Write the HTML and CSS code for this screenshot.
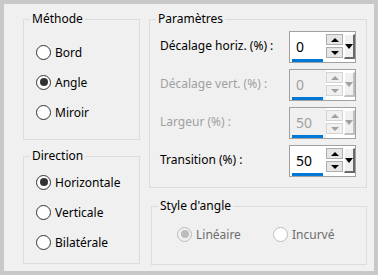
FILE: index.html
```html
<!DOCTYPE html>
<html lang="fr">
<head>
<meta charset="utf-8">
<link rel="stylesheet" href="styles.css">
</head>
<body>
<div class="dialog">
  <div class="col">
    <fieldset class="group methode">
      <legend>Méthode</legend>
      <div class="gbody">
        <label class="radio"><span class="circle"></span>Bord</label>
        <label class="radio"><span class="circle on"></span>Angle</label>
        <label class="radio"><span class="circle"></span>Miroir</label>
      </div>
    </fieldset>
    <fieldset class="group direction">
      <legend>Direction</legend>
      <div class="gbody">
        <label class="radio"><span class="circle on"></span>Horizontale</label>
        <label class="radio"><span class="circle"></span>Verticale</label>
        <label class="radio"><span class="circle"></span>Bilatérale</label>
      </div>
    </fieldset>
  </div>
  <div class="col">
    <fieldset class="group params">
      <legend>Paramètres</legend>
      <div class="gbody">
        <div class="row">
          <span class="lbl">Décalage horiz. (%) :</span>
          <div class="spin">
            <div class="field"><span class="val">0</span><span class="bar"></span></div>
            <div class="btns"><span class="sb up"></span><span class="sb down"></span></div>
            <span class="drop"></span>
          </div>
        </div>
        <div class="row disabled">
          <span class="lbl">Décalage vert. (%) :</span>
          <div class="spin">
            <div class="field"><span class="val">0</span><span class="bar"></span></div>
            <div class="btns"><span class="sb up"></span><span class="sb down"></span></div>
            <span class="drop"></span>
          </div>
        </div>
        <div class="row disabled">
          <span class="lbl">Largeur (%) :</span>
          <div class="spin">
            <div class="field"><span class="val">50</span><span class="bar"></span></div>
            <div class="btns"><span class="sb up"></span><span class="sb down"></span></div>
            <span class="drop"></span>
          </div>
        </div>
        <div class="row">
          <span class="lbl">Transition (%) :</span>
          <div class="spin">
            <div class="field"><span class="val">50</span><span class="bar"></span></div>
            <div class="btns"><span class="sb up"></span><span class="sb down"></span></div>
            <span class="drop"></span>
          </div>
        </div>
      </div>
    </fieldset>
    <fieldset class="group style">
      <legend>Style d'angle</legend>
      <div class="gbody hrow">
        <label class="radio off lin"><span class="circle on"></span>Linéaire</label>
        <label class="radio off"><span class="circle"></span>Incurvé</label>
      </div>
    </fieldset>
  </div>
</div>
</body>
</html>
```
FILE: styles.css
```css
* { box-sizing: border-box; }
html, body { margin: 0; padding: 0; }
body {
  width: 378px;
  height: 275px;
  font-family: "Noto Sans", "Open Sans", sans-serif;
  font-size: 12px;
  color: #000;
}
.dialog {
  width: 378px;
  height: 275px;
  border: 4px solid #c8c8c8;
  background: #f0f0f0;
  padding: 7px 7px 0 19px;
  display: grid;
  grid-template-columns: 117px 218px;
  column-gap: 9px;
  align-items: start;
}
.col { display: flex; flex-direction: column; }
.group {
  margin: 0;
  padding: 0;
  border: 1px solid #dcdcdc;
  min-width: 0;
}
.group legend {
  margin-left: 6px;
  padding: 0 2px;
  line-height: 16px;
}
.methode { height: 129px; }
.methode .gbody { padding: 10px 0 0 12px; }
.direction { margin-top: 8px; height: 116px; }
.direction .gbody { padding: 3px 0 0 12px; }
.radio {
  display: flex;
  align-items: center;
  height: 30px;
  gap: 4px;
}
.circle {
  width: 15px;
  height: 15px;
  border: 1px solid #333;
  border-radius: 50%;
  background: #fff;
  display: flex;
  align-items: center;
  justify-content: center;
  flex: none;
}
.circle.on::after {
  content: "";
  width: 8px;
  height: 8px;
  border-radius: 50%;
  background: #333;
}
.params { height: 177px; }
.params .gbody {
  padding: 4px 10px 0 10px;
  display: flex;
  flex-direction: column;
  gap: 6px;
}
.row {
  display: flex;
  align-items: center;
  justify-content: space-between;
  height: 32px;
}
.lbl { margin-bottom: 4px; }
.disabled .lbl { color: #a0a0a0; }
.spin {
  width: 67px;
  height: 32px;
  border: 1px solid #a0a0a0;
  background: #fff;
  display: flex;
}
.field {
  width: 36px;
  display: flex;
  flex-direction: column;
  justify-content: space-between;
}
.val {
  padding: 6px 0 0 6px;
  font-size: 14px;
  line-height: 18px;
}
.bar {
  display: block;
  margin-left: 2px;
  width: 31px;
  height: 3px;
  background: #0078d7;
}
.btns {
  display: flex;
  flex-direction: column;
  gap: 2px;
  padding-top: 2px;
}
.sb {
  width: 17px;
  height: 11px;
  border: 1px solid #adadad;
  background: #e5e5e5;
  display: flex;
  align-items: center;
  justify-content: center;
}
.sb.up::after {
  content: "";
  border-left: 4px solid transparent;
  border-right: 4px solid transparent;
  border-bottom: 4px solid #000;
}
.sb.down::after {
  content: "";
  border-left: 4px solid transparent;
  border-right: 4px solid transparent;
  border-top: 4px solid #000;
}
.drop {
  margin: 2px 0 3px 1px;
  width: 11px;
  border-top: 1px solid #fff;
  border-left: 1px solid #fff;
  border-right: 2px solid #696969;
  border-bottom: 2px solid #696969;
  background: #f0f0f0;
  display: flex;
  align-items: center;
  justify-content: center;
}
.drop::after {
  content: "";
  border-left: 4px solid transparent;
  border-right: 4px solid transparent;
  border-top: 5px solid #000;
}
.disabled .field { background: #f0f0f0; }
.disabled .val { color: #a0a0a0; }
.disabled .sb { border-color: #d4d4d4; background: #f0f0f0; }
.disabled .sb.up::after { border-bottom-color: #a0a0a0; }
.disabled .sb.down::after { border-top-color: #a0a0a0; }
.disabled .drop { border-right-color: #c0c0c0; border-bottom-color: #c0c0c0; }
.disabled .drop::after { border-top-color: #a0a0a0; }
.style { margin: 10px 0 0 2px; height: 67px; }
.hrow { display: flex; padding: 5px 0 0 25px; }
.radio.off { color: #6d6d6d; }
.radio.off .circle { border-color: #bcbcbc; }
.radio.off .circle.on { background: #f0f0f0; }
.radio.off .circle.on::after { background: #bcbcbc; }
.lin { width: 96px; }
```
